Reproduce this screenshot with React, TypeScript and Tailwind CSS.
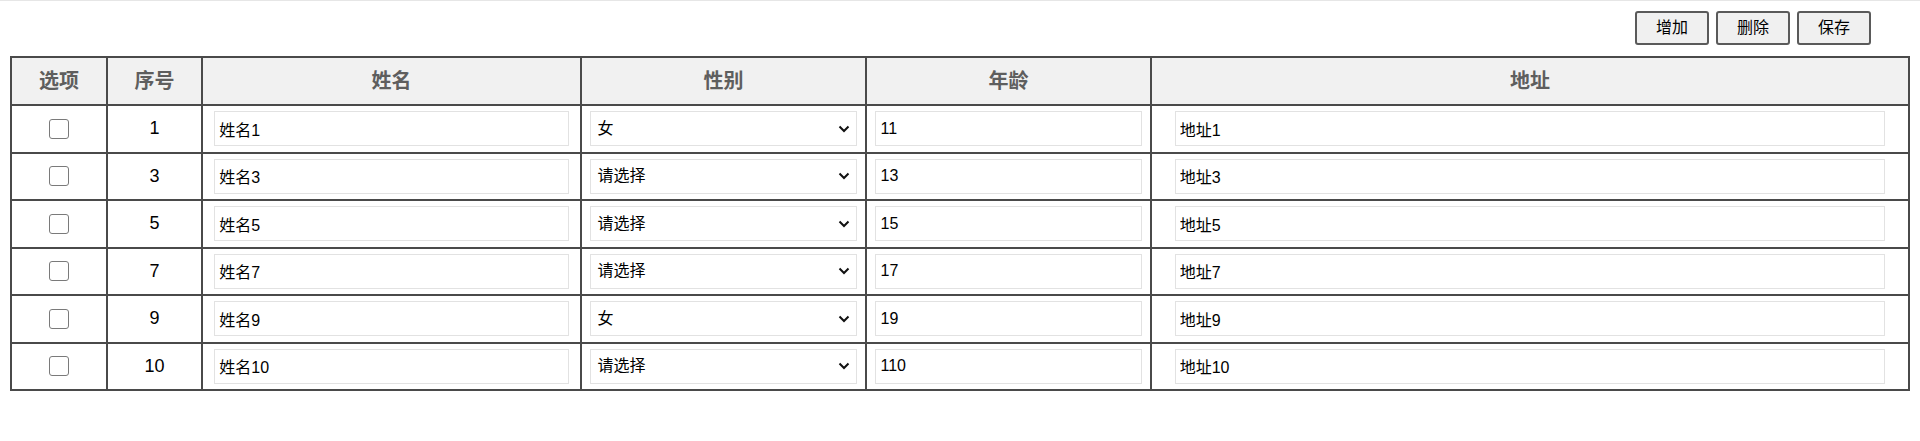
import React from "react";

type Row = { seq: number; name: string; gender: string; age: string; addr: string };

const rows: Row[] = [
  { seq: 1, name: "姓名1", gender: "女", age: "11", addr: "地址1" },
  { seq: 3, name: "姓名3", gender: "请选择", age: "13", addr: "地址3" },
  { seq: 5, name: "姓名5", gender: "请选择", age: "15", addr: "地址5" },
  { seq: 7, name: "姓名7", gender: "请选择", age: "17", addr: "地址7" },
  { seq: 9, name: "姓名9", gender: "女", age: "19", addr: "地址9" },
  { seq: 10, name: "姓名10", gender: "请选择", age: "110", addr: "地址10" },
];

function Btn({ label }: { label: string }) {
  return (
    <button className="w-[74px] h-[34px] rounded-[3px] border-2 border-[#5a5a5a] bg-[#f0f0f0] text-[16px] leading-none text-black">
      {label}
    </button>
  );
}

function Chevron() {
  return (
    <svg width="12" height="8" viewBox="0 0 12 8" className="pointer-events-none absolute right-[7px] top-1/2 -translate-y-1/2">
      <path d="M1.5 1.5 L6 6 L10.5 1.5" fill="none" stroke="#111" strokeWidth="2" />
    </svg>
  );
}

export default function App() {
  const th = "border-2 border-[#4a4a4a] text-center text-[20px] font-bold text-[#5e5e5e] bg-[#f1f1f1] h-[48px] p-0";
  const td = "border-2 border-[#4a4a4a] h-[47.5px] p-0 align-middle";
  const inputCls =
    "block mx-auto w-[94%] h-[35px] border border-[#e2e2e2] bg-white px-[4px] text-[16px] text-black outline-none";
  return (
    <div className="min-h-[441px] border-t border-[#e6e6e6] bg-white font-['Liberation_Sans','Noto_Sans_CJK_SC',sans-serif]">
      <div className="flex justify-end gap-[7px] pr-[49px] pt-[10px]">
        <Btn label="增加" />
        <Btn label="删除" />
        <Btn label="保存" />
      </div>
      <table className="ml-[10px] mt-[11px] w-[1900px] table-fixed border-collapse border-2 border-[#4a4a4a]">
        <colgroup>
          <col className="w-[96px]" />
          <col className="w-[95px]" />
          <col className="w-[379px]" />
          <col className="w-[285px]" />
          <col className="w-[285px]" />
          <col />
        </colgroup>
        <thead>
          <tr>
            <th className={th}>选项</th>
            <th className={th}>序号</th>
            <th className={th}>姓名</th>
            <th className={th}>性别</th>
            <th className={th}>年龄</th>
            <th className={th}>地址</th>
          </tr>
        </thead>
        <tbody>
          {rows.map((r) => (
            <tr key={r.seq}>
              <td className={td}>
                <div className="flex justify-center">
                  <span className="block w-[20px] h-[20px] rounded-[3px] border border-[#7a7a7a] bg-white" />
                </div>
              </td>
              <td className={td + " text-center text-[18px] text-black"}>{r.seq}</td>
              <td className={td}>
                <input className={inputCls} defaultValue={r.name} />
              </td>
              <td className={td}>
                <div className="relative mx-auto w-[94%]">
                  <select
                    className="block w-full h-[35px] appearance-none border border-[#e2e2e2] bg-white pl-[6px] text-[16px] text-black outline-none"
                    defaultValue={r.gender}
                  >
                    <option value="请选择">请选择</option>
                    <option value="男">男</option>
                    <option value="女">女</option>
                  </select>
                  <Chevron />
                </div>
              </td>
              <td className={td}>
                <input className={inputCls} defaultValue={r.age} />
              </td>
              <td className={td}>
                <input className={inputCls} defaultValue={r.addr} />
              </td>
            </tr>
          ))}
        </tbody>
      </table>
    </div>
  );
}
